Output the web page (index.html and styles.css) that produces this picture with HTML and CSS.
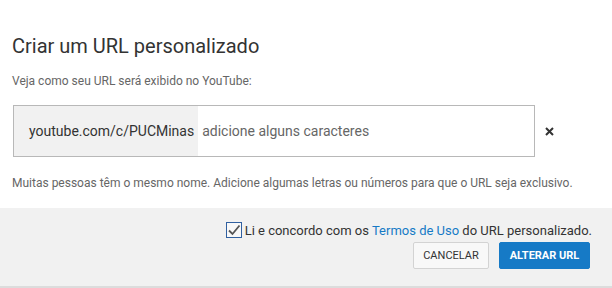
FILE: index.html
```html
<!DOCTYPE html>
<html>
<head>
<meta charset="utf-8">
<link rel="stylesheet" href="styles.css">
</head>
<body>
<div class="dialog">
  <div class="content">
    <h2 class="title">Criar um URL personalizado</h2>
    <p class="subtitle">Veja como seu URL será exibido no YouTube:</p>
    <div class="row">
      <div class="field">
        <span class="prefix">youtube.com/c/PUCMinas</span>
        <span class="placeholder">adicione alguns caracteres</span>
      </div>
      <span class="close">
        <svg width="9" height="9" viewBox="0 0 9 9"><path d="M1 1L8 8M8 1L1 8" stroke="#333" stroke-width="2"/></svg>
      </span>
    </div>
    <p class="help">Muitas pessoas têm o mesmo nome. Adicione algumas letras ou números para que o URL seja exclusivo.</p>
  </div>
  <div class="footer">
    <label class="agree">
      <span class="check">
        <svg width="14" height="14" viewBox="0 0 14 14"><path d="M2 7.5L5.5 11L12.5 2.5" fill="none" stroke="#555" stroke-width="1.8"/></svg>
      </span>
      <span>Li e concordo com os <a class="link">Termos de Uso</a> do URL personalizado.</span>
    </label>
    <div class="buttons">
      <button class="btn btn-default">CANCELAR</button>
      <button class="btn btn-primary">ALTERAR URL</button>
    </div>
  </div>
  <div class="bottom"></div>
</div>
</body>
</html>
```
FILE: styles.css
```css
* { box-sizing: border-box; }
html, body { margin: 0; padding: 0; background: #fff; }
body { font-family: Roboto, "Liberation Sans", sans-serif; width: 612px; height: 288px; overflow: hidden; }
.dialog { display: flex; flex-direction: column; height: 288px; }
.content { padding: 33px 12px 0 12px; height: 208px; }
.title { margin: 0; font-size: 20px; font-weight: 400; color: #333; line-height: 26px; }
.subtitle { margin: 14px 0 0; font-size: 12px; color: #666; line-height: 16px; }
.row { display: flex; align-items: center; margin-top: 16px; }
.field { display: flex; align-items: stretch; width: 522px; height: 52px; border: 1px solid #b8b8b8; margin-left: 1px; }
.prefix { display: flex; align-items: center; background: #f1f1f1; padding: 0 4px 0 15px; font-size: 14px; color: #333; }
.placeholder { display: flex; align-items: center; padding-left: 4px; font-size: 14px; color: #666; }
.close { display: flex; margin-left: 10px; margin-top: 0; }
.help { margin: 18px 0 0; font-size: 12px; color: #666; line-height: 16px; }
.footer { flex: 1; background: #f1f1f1; display: flex; flex-direction: column; align-items: flex-end; padding: 14px 20px 0 0; }
.agree { display: flex; align-items: center; font-size: 13px; color: #333; }
.check { width: 16px; height: 16px; border: 1px solid #3060a0; display: flex; align-items: center; justify-content: center; margin-right: 3px; background: #f8f8f8; }
.link { color: #167ac6; }
.buttons { display: flex; gap: 10px; margin-top: 4px; margin-right: 2px; }
.btn { height: 27px; font-family: Roboto, "Liberation Sans", sans-serif; font-size: 11px; border-radius: 2px; padding: 0; cursor: pointer; white-space: nowrap; }
.btn-default { width: 76px; background: #f8f8f8; border: 1px solid #d3d3d3; color: #333; font-weight: 400; }
.btn-primary { width: 91px; background: #167ac6; border: 1px solid #167ac6; color: #fff; font-weight: 700; }
.bottom { height: 2px; background: #dcdcdc; }
```
